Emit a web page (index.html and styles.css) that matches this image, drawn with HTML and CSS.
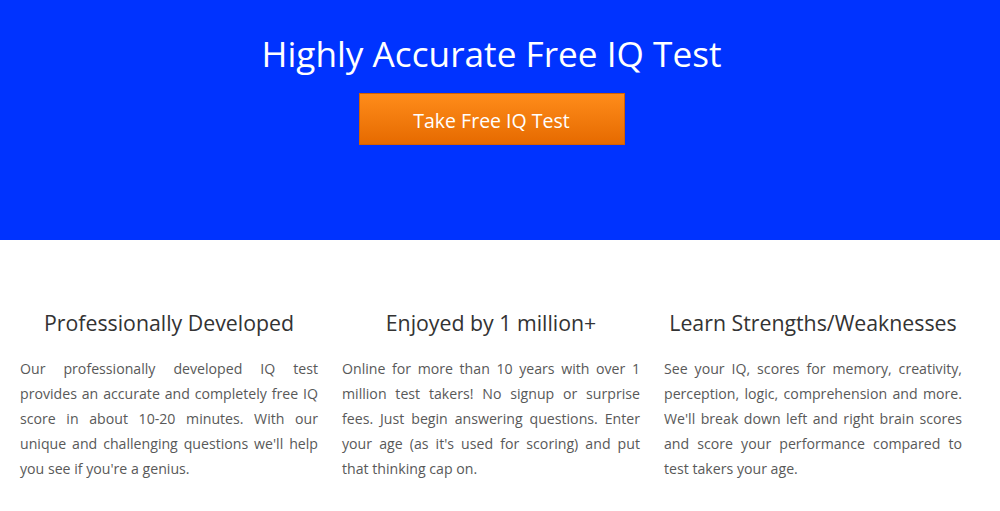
FILE: index.html
```html
<!DOCTYPE html>
<html lang="en">
<head>
<meta charset="UTF-8" />
<meta name="viewport" content="width=device-width, initial-scale=1.0"/>
<title>Free IQ Test</title>
<link rel="stylesheet" href="styles.css">
</head>
<body>

<header class="hero">
  <div class="hero-inner">
    <h1>Highly Accurate Free IQ Test</h1>
    <a class="start-btn" href="#">Take Free IQ Test</a>
  </div>
</header>

<div class="features">
  <div class="feature">
    <h2>Professionally Developed</h2>
    <p>Our professionally developed IQ test provides an accurate and completely free IQ score in about 10-20 minutes. With our unique and challenging questions we'll help you see if you're a genius.</p>
  </div>
  <div class="feature">
    <h2>Enjoyed by 1 million+</h2>
    <p>Online for more than 10 years with over 1 million test takers! No signup or surprise fees. Just begin answering questions. Enter your age (as it's used for scoring) and put that thinking cap on.</p>
  </div>
  <div class="feature">
    <h2>Learn Strengths/Weaknesses</h2>
    <p>See your IQ, scores for memory, creativity, perception, logic, comprehension and more. We'll break down left and right brain scores and score your performance compared to test takers your age.</p>
  </div>
</div>

</body>
</html>
```

FILE: styles.css
```css
body {
  font-family: "Open Sans", Arial, sans-serif;
  background: #ffffff;
  margin: 0;
  padding: 0;
}

.hero {
  background: #0033ff;
  color: #ffffff;
  height: 240px;
  box-sizing: border-box;
  padding-top: 29px;
}

.hero-inner {
  width: 983px;
  text-align: center;
}

.hero h1 {
  margin: 0;
  font-size: 35.2px;
  font-weight: 400;
  line-height: 48px;
}

.start-btn {
  display: inline-block;
  box-sizing: border-box;
  width: 266px;
  height: 52px;
  margin-top: 16px;
  line-height: 53px;
  font-size: 19.5px;
  color: #ffffff;
  text-decoration: none;
  background: linear-gradient(#ff8c1a, #e66a00);
  border: 1px solid #d46000;
}

.features {
  display: grid;
  grid-template-columns: repeat(3, 298px);
  column-gap: 24px;
  padding: 68px 0 0 20px;
}

.feature h2 {
  margin: 0 0 18px;
  font-size: 21.3px;
  font-weight: 400;
  line-height: 30px;
  color: #333333;
  text-align: center;
}

.feature p {
  margin: 0;
  font-size: 14.15px;
  line-height: 25px;
  color: #595959;
  text-align: justify;
}
```
